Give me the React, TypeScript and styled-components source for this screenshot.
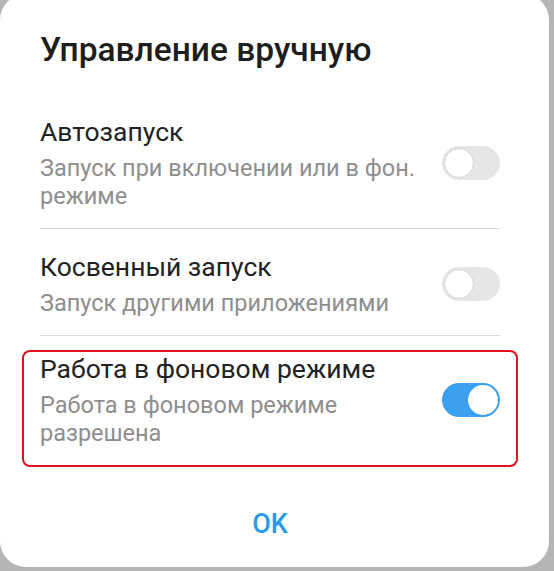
import styled, { createGlobalStyle } from "styled-components";

const GlobalStyle = createGlobalStyle`
	html, body {
		margin: 0;
		padding: 0;
		background: #b5b5b5;
		font-family: Roboto, "Noto Sans", "Liberation Sans", sans-serif;
		overflow: hidden;
	}
`;

const Dialog = styled.div`
	box-sizing: border-box;
	width: 549px;
	height: 573px;
	margin-top: -6px;
	padding: 36px 49px 0 40px;
	background: #fff;
	border-radius: 26px;
	display: flex;
	flex-direction: column;
`;

const Title = styled.h1`
	margin: 0 0 24px;
	font-size: 33.5px;
	line-height: 40px;
	font-weight: 500;
	color: #1e1e1e;
`;

const Row = styled.div<{ highlighted?: boolean }>`
	display: flex;
	align-items: center;
	gap: 20px;
	padding: 22px 0 18px;
	border-bottom: 1px solid #dcdcdc;

	${({ highlighted }) =>
		highlighted &&
		`
		border: 2px solid #e2121c;
		border-radius: 8px;
		margin: 14px -18px 0;
		padding: 1px 16px 18px 16px;
	`}
`;

const Texts = styled.div`
	flex: 1;
	display: flex;
	flex-direction: column;
	gap: 6px;
`;

const RowTitle = styled.div`
	font-size: 26.5px;
	line-height: 32px;
	color: #222;
`;

const RowHint = styled.div`
	font-size: 23.5px;
	line-height: 28px;
	color: #8e8e8e;
`;

const Track = styled.div<{ on: boolean }>`
	box-sizing: border-box;
	flex: none;
	width: 58px;
	height: 34px;
	border-radius: 17px;
	padding: 2px;
	display: flex;
	justify-content: ${({ on }) => (on ? "flex-end" : "flex-start")};
	background: ${({ on }) => (on ? "#3aa0ef" : "#e6e6e6")};
`;

const Knob = styled.div<{ on: boolean }>`
	box-sizing: border-box;
	width: 30px;
	height: 30px;
	border-radius: 50%;
	background: #fff;
	border: ${({ on }) => (on ? "none" : "1px solid #d4d4d4")};
`;

const Footer = styled.div`
	flex: 1;
	display: flex;
	justify-content: center;
	align-items: center;
	padding-top: 14px;
`;

const OkButton = styled.button`
	border: none;
	background: none;
	font-family: inherit;
	font-size: 27px;
	font-weight: 500;
	color: #2b9be8;
	padding: 4px 20px;
`;

const items = [
	{ title: "Автозапуск", hint: "Запуск при включении или в фон. режиме", on: false },
	{ title: "Косвенный запуск", hint: "Запуск другими приложениями", on: false },
	{ title: "Работа в фоновом режиме", hint: "Работа в фоновом режиме разрешена", on: true, highlighted: true },
];

function Toggle({ on }: { on: boolean }) {
	return (
		<Track on={on}>
			<Knob on={on} />
		</Track>
	);
}

export default function App() {
	return (
		<>
			<GlobalStyle />
			<Dialog>
				<Title>Управление вручную</Title>
				{items.map((item, index) => (
					<Row key={index} highlighted={item.highlighted}>
						<Texts>
							<RowTitle>{item.title}</RowTitle>
							<RowHint>{item.hint}</RowHint>
						</Texts>
						<Toggle on={item.on} />
					</Row>
				))}
				<Footer>
					<OkButton>OK</OkButton>
				</Footer>
			</Dialog>
		</>
	);
}
